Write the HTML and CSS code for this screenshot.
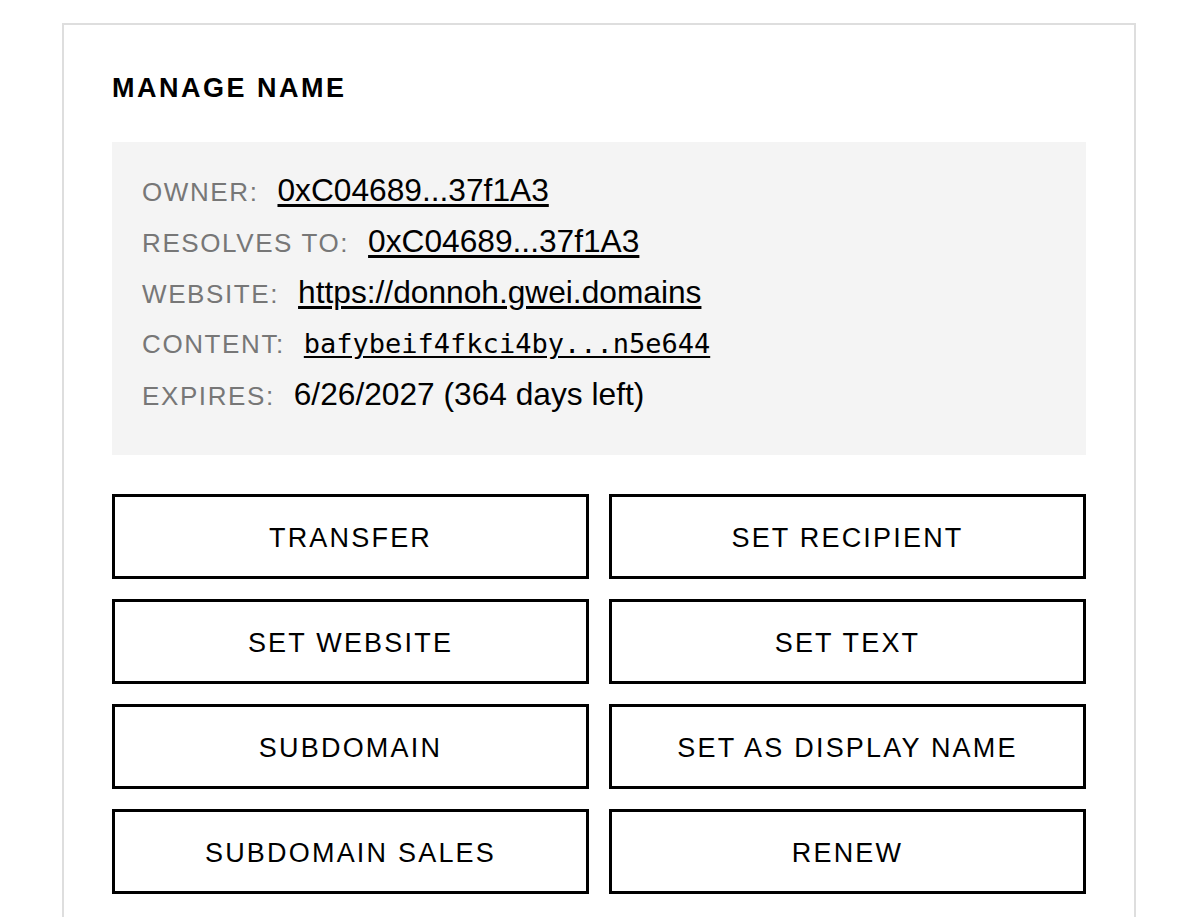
FILE: index.html
```html
<!DOCTYPE html>
<html lang="en">
<head>
  <meta charset="UTF-8" />
  <meta name="viewport" content="width=device-width, initial-scale=1.0" />
  <title>Manage Name</title>
  <link rel="stylesheet" href="styles.css">
</head>
<body>

  <div class="card">
    <h2>Manage Name</h2>

    <div class="details">
      <div class="row">
        <span class="label">OWNER:</span>
        <a href="#" class="value">0xC04689...37f1A3</a>
      </div>
      <div class="row">
        <span class="label">RESOLVES TO:</span>
        <a href="#" class="value">0xC04689...37f1A3</a>
      </div>
      <div class="row">
        <span class="label">WEBSITE:</span>
        <a href="#" class="value">https://donnoh.gwei.domains</a>
      </div>
      <div class="row">
        <span class="label">CONTENT:</span>
        <a href="#" class="value mono">bafybeif4fkci4by...n5e644</a>
      </div>
      <div class="row">
        <span class="label">EXPIRES:</span>
        <span class="value">6/26/2027 (364 days left)</span>
      </div>
    </div>

    <div class="actions">
      <button>Transfer</button>
      <button>Set Recipient</button>
      <button>Set Website</button>
      <button>Set Text</button>
      <button>Subdomain</button>
      <button>Set as Display Name</button>
      <button>Subdomain Sales</button>
      <button>Renew</button>
    </div>
  </div>

</body>
</html>
```

FILE: styles.css
```css
* {
  box-sizing: border-box;
}

body {
  font-family: "Liberation Sans", Arial, sans-serif;
  margin: 0;
  padding: 23px 2px 0 0;
  background: #fff;
  color: #000;
}

.card {
  width: 1074px;
  margin: 0 auto;
  border: 2px solid #dedede;
  padding: 47px 48px 48px;
}

h2 {
  margin: 0 0 38px;
  font-size: 27px;
  line-height: 32px;
  font-weight: bold;
  letter-spacing: 2.5px;
  text-transform: uppercase;
}

.details {
  background: #f4f4f4;
  padding: 23px 30px 35px;
}

.row {
  display: flex;
  align-items: baseline;
  gap: 19px;
  height: 51px;
  line-height: 51px;
}

.label {
  font-size: 26px;
  letter-spacing: 1.6px;
  color: #777;
}

.value {
  font-size: 31.7px;
  color: #000;
}

a.value {
  text-decoration: underline;
  text-underline-offset: 3px;
}

.value.mono {
  font-family: "DejaVu Sans Mono", monospace;
  font-size: 27px;
}

.actions {
  display: grid;
  grid-template-columns: 1fr 1fr;
  gap: 20px;
  margin-top: 39px;
}

.actions button {
  height: 85px;
  padding: 3px 0 0;
  background: #fff;
  border: 3px solid #000;
  font-family: "Liberation Sans", Arial, sans-serif;
  font-size: 27px;
  letter-spacing: 2.2px;
  text-transform: uppercase;
  color: #000;
  cursor: pointer;
}
```
